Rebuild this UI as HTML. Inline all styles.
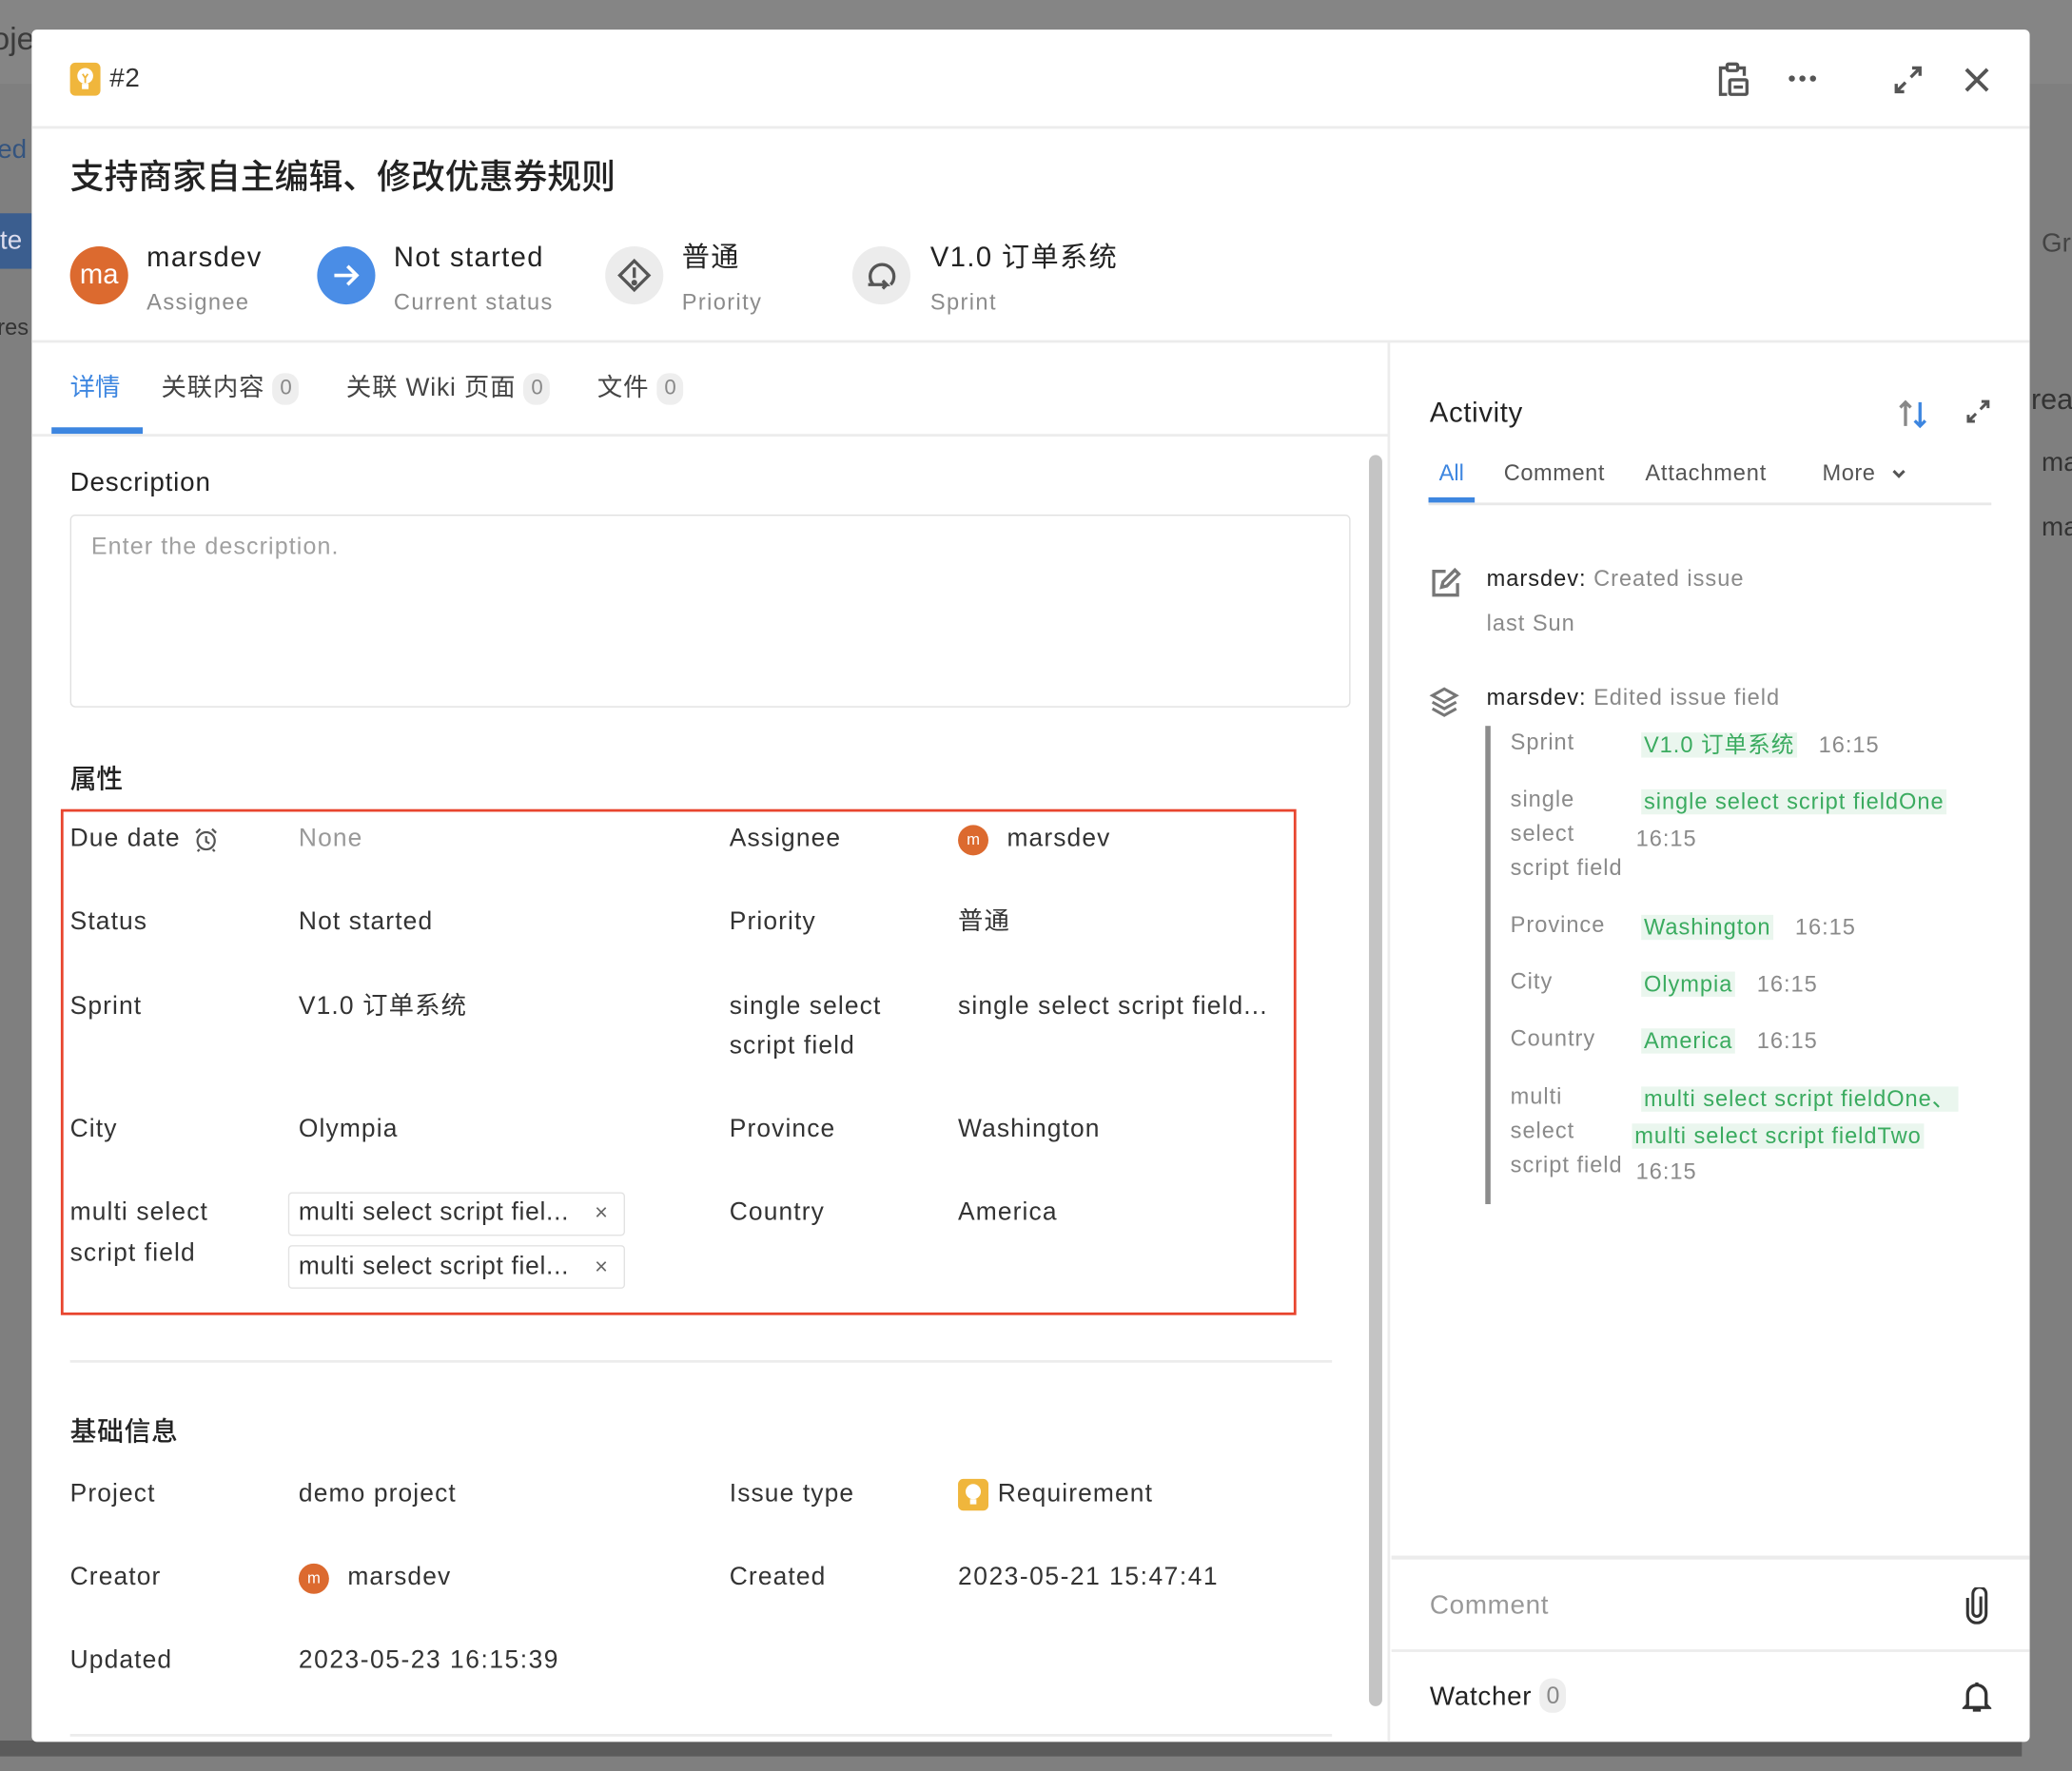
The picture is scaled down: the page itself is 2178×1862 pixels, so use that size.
<!DOCTYPE html>
<html><head><meta charset="utf-8"><style>
*{margin:0;padding:0;box-sizing:border-box}
html,body{width:2178px;height:1860px;overflow:hidden;background:#7f7f7f}
#s{position:absolute;left:0;top:2px;width:1568px;height:1339px;transform:scale(1.38903);transform-origin:0 0;font-family:"Liberation Sans","Noto Sans CJK SC",sans-serif;color:#333}
.a{position:absolute}
.t{position:absolute;white-space:nowrap;line-height:30px;height:30px}
.lab{font-size:19px;color:#333;letter-spacing:.8px}
.m{letter-spacing:1px}
.g{color:#8c8c8c}
.hl{background:#eaf6ee;color:#3aab5f;padding:0 2px}
.ts{font-size:17px;color:#8a8a8a;letter-spacing:.7px}
.badge{display:inline-block;background:#eee;border-radius:9px;color:#888;font-size:16px;width:20px;height:24px;line-height:24px;text-align:center;margin-left:6px;vertical-align:1px;letter-spacing:0}
</style></head><body><div id="s">
<div class="a" style="left:0;top:-2px;width:1568px;height:64px;background:#858585"></div>
<div class="t" style="left:-6px;top:14px;font-size:24px;color:#3a3a3a">oje</div>
<div class="a" style="left:0;top:160px;width:24px;height:42px;background:#3b5e8f"></div>
<div class="t" style="left:0;top:166px;font-size:20px;color:#dde">te</div>
<div class="t" style="left:-2px;top:97px;font-size:20px;color:#34547f">ed</div>
<div class="t" style="left:-2px;top:232px;font-size:17px;color:#333">res</div>
<div class="t" style="left:1545px;top:168px;font-size:20px;color:#444">Gr</div>
<div class="t" style="left:1537px;top:286px;font-size:22px;color:#333">reat</div>
<div class="t" style="left:1545px;top:334px;font-size:20px;color:#333">ma</div>
<div class="t" style="left:1545px;top:383px;font-size:20px;color:#333">ma</div>
<div class="a" style="left:0;top:1316px;width:1530px;height:12px;background:#5b5b5b"></div>

<div class="a" style="left:24px;top:21px;width:1512px;height:1296px;background:#fff;border-radius:4px;overflow:hidden"></div>
<div class="a" style="left:24px;top:94px;width:1512px;height:2px;background:#ececec"></div>
<div class="a" style="left:24px;top:256px;width:1512px;height:2px;background:#ececec"></div>

<div class="a" style="left:53px;top:46px;width:23px;height:25px;background:#f0b63c;border-radius:4px"></div>
<svg class="a" style="left:53px;top:46px" width="23" height="25" viewBox="0 0 23 25"><circle cx="11.5" cy="10" r="6" fill="#fff"/><rect x="9" y="16" width="5" height="4" fill="#fff"/><path d="M9.5 8.5l2 3 2-3M11.5 11.5v4" stroke="#f0b63c" stroke-width="1.3" fill="none"/></svg>
<div class="t" style="left:83px;top:43px;font-size:20px;color:#333;letter-spacing:.5px">#2</div>
<svg class="a" style="left:1299px;top:45px" width="26" height="28" viewBox="0 0 26 28" fill="none" stroke="#555" stroke-width="2.4"><path d="M8 5H3v20h5"/><rect x="8" y="2" width="8" height="5" rx="1"/><path d="M16 5h5v6"/><rect x="10" y="14" width="13" height="11" rx="1"/><path d="M13 19.5h7"/></svg>
<svg class="a" style="left:1352px;top:53px" width="24" height="10"><circle cx="4" cy="5" r="2.3" fill="#555"/><circle cx="12" cy="5" r="2.3" fill="#555"/><circle cx="20" cy="5" r="2.3" fill="#555"/></svg>
<svg class="a" style="left:1432px;top:47px" width="24" height="24" viewBox="0 0 24 24" fill="none" stroke="#555" stroke-width="2.4"><path d="M14 10l7-7M15 3h6v6M10 14l-7 7M3 15v6h6"/></svg>
<svg class="a" style="left:1485px;top:48px" width="22" height="22" viewBox="0 0 22 22" stroke="#555" stroke-width="2.8"><path d="M3 3l16 16M19 3L3 19"/></svg>

<div class="t" style="left:53px;top:116px;font-size:25.8px;line-height:34px;height:34px;color:#222;font-weight:500">支持商家自主编辑、修改优惠券规则</div>

<div class="a" style="left:53px;top:185px;width:44px;height:44px;border-radius:50%;background:#dc6a2f;color:#fff;font-size:21px;text-align:center;line-height:44px">ma</div>
<div class="t m" style="left:111px;top:179px;font-size:21px;color:#222">marsdev</div>
<div class="t m" style="left:111px;top:213px;font-size:17px;color:#8c8c8c">Assignee</div>
<div class="a" style="left:240px;top:185px;width:44px;height:44px;border-radius:50%;background:#4a8de6"></div>
<svg class="a" style="left:249px;top:194px" width="26" height="26" viewBox="0 0 26 26" fill="none" stroke="#fff" stroke-width="2.6"><path d="M4 13h17M14 6l7 7-7 7"/></svg>
<div class="t m" style="left:298px;top:179px;font-size:21px;color:#222">Not started</div>
<div class="t m" style="left:298px;top:213px;font-size:17px;color:#8c8c8c">Current status</div>
<div class="a" style="left:458px;top:185px;width:44px;height:44px;border-radius:50%;background:#ececec"></div>
<svg class="a" style="left:466px;top:193px" width="28" height="28" viewBox="0 0 28 28" fill="none" stroke="#555" stroke-width="2.4"><path d="M14 3l11 11-11 11L3 14z"/><path d="M14 8v8"/><circle cx="14" cy="19.5" r="1" fill="#555"/></svg>
<div class="t m" style="left:516px;top:179px;font-size:21px;color:#222">普通</div>
<div class="t m" style="left:516px;top:213px;font-size:17px;color:#8c8c8c">Priority</div>
<div class="a" style="left:645px;top:185px;width:44px;height:44px;border-radius:50%;background:#ececec"></div>
<svg class="a" style="left:653px;top:193px" width="30" height="30" viewBox="0 0 30 30" fill="none" stroke="#555" stroke-width="2.4"><path d="M8 21a9 9 0 1 1 13 0"/><path d="M4 21h14l-3-3M18 21l-3 3"/></svg>
<div class="t m" style="left:704px;top:179px;font-size:21px;color:#222">V1.0 订单系统</div>
<div class="t m" style="left:704px;top:213px;font-size:17px;color:#8c8c8c">Sprint</div>

<div class="t" style="left:53px;top:278px;font-size:19px;color:#3d86e0">详情</div>
<div class="t" style="left:122px;top:278px;font-size:19px;color:#444;letter-spacing:.6px">关联内容<span class="badge">0</span></div>
<div class="t" style="left:262px;top:278px;font-size:19px;color:#444;letter-spacing:.6px">关联 Wiki 页面<span class="badge">0</span></div>
<div class="t" style="left:452px;top:278px;font-size:19px;color:#444;letter-spacing:.6px">文件<span class="badge">0</span></div>
<div class="a" style="left:39px;top:322px;width:69px;height:5px;background:#3d86e0"></div>
<div class="a" style="left:24px;top:327px;width:1027px;height:2px;background:#ececec"></div>
<div class="a" style="left:1050px;top:258px;width:2px;height:1059px;background:#ececec"></div>
<div class="a" style="left:1036px;top:343px;width:10px;height:947px;background:#c4c4c4;border-radius:5px"></div>

<div class="t" style="left:53px;top:349px;font-size:20px;color:#222;font-weight:500;letter-spacing:.6px">Description</div>
<div class="a" style="left:53px;top:388px;width:969px;height:146px;border:1.5px solid #e0e0e0;border-radius:4px"></div>
<div class="t" style="left:69px;top:397px;font-size:18px;color:#a0a0a0;letter-spacing:.8px">Enter the description.</div>

<div class="t" style="left:53px;top:574px;font-size:20px;color:#222;font-weight:500">属性</div>
<div class="a" style="left:46px;top:611px;width:935px;height:383px;border:2px solid #e8452e"></div>

<div class="t lab" style="left:53px;top:619px">Due date</div>
<svg class="a" style="left:146px;top:624px" width="20" height="20" viewBox="0 0 20 20" fill="none" stroke="#555" stroke-width="1.6"><circle cx="10" cy="11" r="6.5"/><path d="M10 7.5v4l2.5 1.5M2.5 5l3-3M17.5 5l-3-3M5 17.5l-1.5 1.5M15 17.5l1.5 1.5"/></svg>
<div class="t lab" style="left:226px;top:619px;color:#999">None</div>
<div class="t lab" style="left:552px;top:619px">Assignee</div>
<div class="a" style="left:725px;top:623px;width:23px;height:23px;border-radius:50%;background:#dc6a2f;color:#fff;font-size:12px;text-align:center;line-height:23px">m</div>
<div class="t lab" style="left:762px;top:619px">marsdev</div>

<div class="t lab" style="left:53px;top:682px">Status</div>
<div class="t lab" style="left:226px;top:682px">Not started</div>
<div class="t lab" style="left:552px;top:682px">Priority</div>
<div class="t lab" style="left:725px;top:682px">普通</div>

<div class="t lab" style="left:53px;top:746px">Sprint</div>
<div class="t lab" style="left:226px;top:746px">V1.0 订单系统</div>
<div class="t lab" style="left:552px;top:746px">single select</div>
<div class="t lab" style="left:552px;top:776px">script field</div>
<div class="t lab" style="left:725px;top:746px">single select script field...</div>

<div class="t lab" style="left:53px;top:839px">City</div>
<div class="t lab" style="left:226px;top:839px">Olympia</div>
<div class="t lab" style="left:552px;top:839px">Province</div>
<div class="t lab" style="left:725px;top:839px">Washington</div>

<div class="t lab" style="left:53px;top:902px">multi select</div>
<div class="t lab" style="left:53px;top:933px">script field</div>
<div class="a" style="left:218px;top:901px;width:255px;height:33px;border:1.5px solid #e2e2e2;border-radius:3px"></div>
<div class="t lab" style="left:226px;top:902px;letter-spacing:.5px">multi select script fiel...</div>
<div class="t" style="left:450px;top:902px;font-size:17px;color:#666">×</div>
<div class="a" style="left:218px;top:941px;width:255px;height:33px;border:1.5px solid #e2e2e2;border-radius:3px"></div>
<div class="t lab" style="left:226px;top:943px;letter-spacing:.5px">multi select script fiel...</div>
<div class="t" style="left:450px;top:943px;font-size:17px;color:#666">×</div>
<div class="t lab" style="left:552px;top:902px">Country</div>
<div class="t lab" style="left:725px;top:902px">America</div>

<div class="a" style="left:53px;top:1028px;width:955px;height:2px;background:#ececec"></div>
<div class="t" style="left:53px;top:1068px;font-size:20px;color:#222;font-weight:500;letter-spacing:.5px">基础信息</div>
<div class="t lab" style="left:53px;top:1115px">Project</div>
<div class="t lab" style="left:226px;top:1115px">demo project</div>
<div class="t lab" style="left:552px;top:1115px">Issue type</div>
<div class="a" style="left:725px;top:1118px;width:23px;height:24px;background:#f0b63c;border-radius:4px"></div>
<svg class="a" style="left:725px;top:1118px" width="23" height="24" viewBox="0 0 23 25"><circle cx="11.5" cy="10" r="6" fill="#fff"/><rect x="9" y="16" width="5" height="4" fill="#fff"/></svg>
<div class="t lab" style="left:755px;top:1115px">Requirement</div>
<div class="t lab" style="left:53px;top:1178px">Creator</div>
<div class="a" style="left:226px;top:1182px;width:23px;height:23px;border-radius:50%;background:#dc6a2f;color:#fff;font-size:12px;text-align:center;line-height:23px">m</div>
<div class="t lab" style="left:263px;top:1178px">marsdev</div>
<div class="t lab" style="left:552px;top:1178px">Created</div>
<div class="t lab" style="left:725px;top:1178px;letter-spacing:1.1px">2023-05-21 15:47:41</div>
<div class="t lab" style="left:53px;top:1241px">Updated</div>
<div class="t lab" style="left:226px;top:1241px;letter-spacing:1.1px">2023-05-23 16:15:39</div>
<div class="a" style="left:53px;top:1311px;width:955px;height:2px;background:#ececec"></div>

<div class="t" style="left:1082px;top:297px;font-size:21px;color:#222;letter-spacing:.5px">Activity</div>
<svg class="a" style="left:1435px;top:300px" width="26" height="24" viewBox="0 0 26 24" fill="none" stroke-width="2.4"><path d="M7 21V3M3 7l4-4 4 4" stroke="#888"/><path d="M18 3v18M14 17l4 4 4-4" stroke="#3d86e0"/></svg>
<svg class="a" style="left:1487px;top:300px" width="20" height="20" viewBox="0 0 24 24" fill="none" stroke="#555" stroke-width="2.6"><path d="M14 10l7-7M15 3h6v6M10 14l-7 7M3 15v6h6"/></svg>
<div class="t" style="left:1089px;top:342px;font-size:17px;color:#3d86e0">All</div>
<div class="t" style="left:1138px;top:342px;font-size:17px;color:#555;letter-spacing:.4px">Comment</div>
<div class="t" style="left:1245px;top:342px;font-size:17px;color:#555;letter-spacing:.6px">Attachment</div>
<div class="t" style="left:1379px;top:342px;font-size:17px;color:#555;letter-spacing:.4px">More</div>
<svg class="a" style="left:1431px;top:352px" width="12" height="10" viewBox="0 0 12 10" fill="none" stroke="#555" stroke-width="2.2"><path d="M2 3l4 4 4-4"/></svg>
<div class="a" style="left:1081px;top:375px;width:35px;height:4px;background:#3d86e0"></div>
<div class="a" style="left:1081px;top:379px;width:426px;height:1.5px;background:#e8e8e8"></div>

<svg class="a" style="left:1082px;top:428px" width="24" height="24" viewBox="0 0 24 24" fill="none" stroke="#777" stroke-width="2.4"><path d="M12 3H3v18h18v-9"/><path d="M9 15l1-4 9-9 3 3-9 9z"/></svg>
<div class="t ts" style="left:1125px;top:422px"><span style="color:#222;font-weight:500">marsdev:</span> Created issue</div>
<div class="t ts" style="left:1125px;top:456px">last Sun</div>

<svg class="a" style="left:1081px;top:518px" width="24" height="24" viewBox="0 0 24 24" fill="none" stroke="#777" stroke-width="2.2"><path d="M12 2l9 5-9 5-9-5z"/><path d="M3 12l9 5 9-5M3 17l9 5 9-5"/></svg>
<div class="t ts" style="left:1125px;top:512px"><span style="color:#222;font-weight:500">marsdev:</span> Edited issue field</div>
<div class="a" style="left:1124px;top:548px;width:4px;height:362px;background:#8c8c8c"></div>

<div class="t ts" style="left:1143px;top:546px">Sprint</div>
<div class="t ts" style="left:1242px;top:548px"><span class="hl">V1.0 订单系统</span>&nbsp;&nbsp; 16:15</div>
<div class="t ts" style="left:1143px;top:589px">single</div>
<div class="t ts" style="left:1143px;top:615px">select</div>
<div class="t ts" style="left:1143px;top:641px">script field</div>
<div class="t ts" style="left:1242px;top:591px"><span class="hl">single select script fieldOne</span></div>
<div class="t ts" style="left:1238px;top:619px">16:15</div>
<div class="t ts" style="left:1143px;top:684px">Province</div>
<div class="t ts" style="left:1242px;top:686px"><span class="hl">Washington</span>&nbsp;&nbsp; 16:15</div>
<div class="t ts" style="left:1143px;top:727px">City</div>
<div class="t ts" style="left:1242px;top:729px"><span class="hl">Olympia</span>&nbsp;&nbsp; 16:15</div>
<div class="t ts" style="left:1143px;top:770px">Country</div>
<div class="t ts" style="left:1242px;top:772px"><span class="hl">America</span>&nbsp;&nbsp; 16:15</div>
<div class="t ts" style="left:1143px;top:814px">multi</div>
<div class="t ts" style="left:1143px;top:840px">select</div>
<div class="t ts" style="left:1143px;top:866px">script field</div>
<div class="t ts" style="left:1242px;top:816px"><span class="hl">multi select script fieldOne、</span></div>
<div class="t ts" style="left:1235px;top:844px"><span class="hl">multi select script fieldTwo</span></div>
<div class="t ts" style="left:1238px;top:871px">16:15</div>

<div class="a" style="left:1053px;top:1176px;width:483px;height:3px;background:#ececec"></div>
<div class="t" style="left:1082px;top:1199px;font-size:20px;color:#999;letter-spacing:.5px">Comment</div>
<svg class="a" style="left:1486px;top:1200px" width="20" height="28" viewBox="0 0 20 28" fill="none" stroke="#333" stroke-width="2.2"><path d="M13 7v12a3 3 0 0 1-6 0V5a5 5 0 0 1 10 0v15a7 7 0 0 1-14 0V8"/></svg>
<div class="a" style="left:1053px;top:1247px;width:483px;height:2px;background:#ececec"></div>
<div class="t" style="left:1082px;top:1268px;font-size:20px;color:#222;letter-spacing:.5px">Watcher<span class="badge" style="font-size:18px;height:26px;line-height:26px">0</span></div>
<svg class="a" style="left:1485px;top:1270px" width="22" height="26" viewBox="0 0 22 26" fill="none" stroke="#333" stroke-width="2.4"><path d="M4 19V11a7 7 0 0 1 14 0v8l2 2H2z"/><path d="M11 2v2M8 23h6"/></svg>
</div></body></html>
